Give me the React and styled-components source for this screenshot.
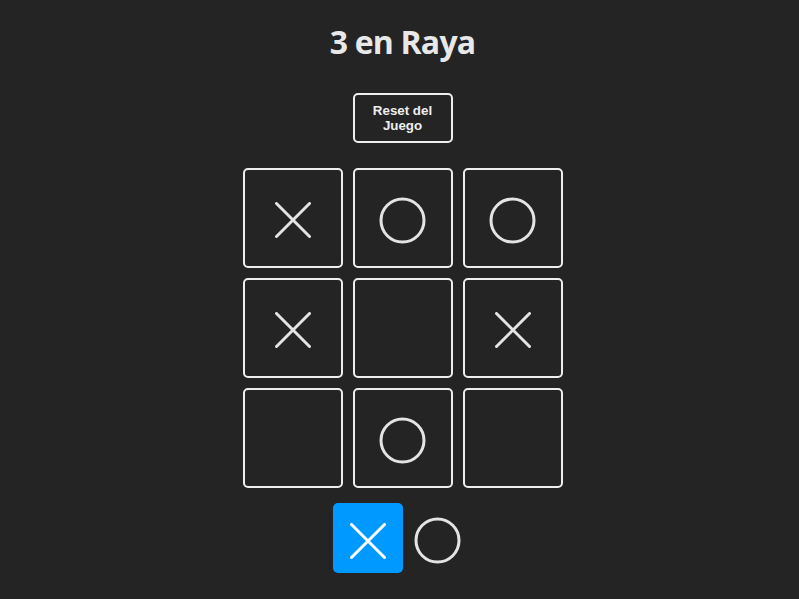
import React, {useState} from 'react';
import styled, {createGlobalStyle} from 'styled-components';

const GlobalStyle = createGlobalStyle`
    html, body {
        margin: 0;
        padding: 0;
        background: #242424;
    }
    body {
        color: rgba(255, 255, 255, 0.87);
        font-family: "Open Sans", "Liberation Sans", sans-serif;
    }
`;

const inicial = ['x', 'o', 'o', 'x', null, 'x', null, 'o', null];

const Cruz = ({size = 36, color = '#e4e4e4', grosor = 3}) => (
    <svg width={size} height={size} viewBox='0 0 36 36'>
        <line x1='1.5' y1='1.5' x2='34.5' y2='34.5' stroke={color} strokeWidth={grosor} strokeLinecap='round' />
        <line x1='34.5' y1='1.5' x2='1.5' y2='34.5' stroke={color} strokeWidth={grosor} strokeLinecap='round' />
    </svg>
);

const Circulo = ({size = 47, color = '#e4e4e4'}) => (
    <svg width={size} height={size} viewBox='0 0 47 47'>
        <circle cx='23.5' cy='23.5' r='21.5' fill='none' stroke={color} strokeWidth='3' />
    </svg>
);

const Ficha = ({valor}) => {
    if (valor === 'x') return <Cruz />;
    if (valor === 'o') return <Circulo />;
    return null;
}

const App = () => {
    const [tablero, cambiarTablero] = useState(inicial);
    const [turno, cambiarTurno] = useState('x');

    const resetJuego = () => {
        cambiarTablero(Array(9).fill(null));
        cambiarTurno('x');
    }

    const jugar = (i) => {
        if (tablero[i]) return;
        const nuevo = [...tablero];
        nuevo[i] = turno;
        cambiarTablero(nuevo);
        cambiarTurno(turno === 'x' ? 'o' : 'x');
    }

    return (
        <>
            <GlobalStyle />
            <Contenedor>
                <Titulo>3 en Raya</Titulo>
                <BotonReset onClick={resetJuego}>Reset del Juego</BotonReset>
                <Tablero>
                    {tablero.map((valor, i) => (
                        <Casilla key={i} onClick={() => jugar(i)}>
                            <Ficha valor={valor} />
                        </Casilla>
                    ))}
                </Tablero>
                <Turno>
                    <CasillaTurno activo={turno === 'x'}>
                        <Cruz size={36} color='#fff' />
                    </CasillaTurno>
                    <CasillaTurno activo={turno === 'o'}>
                        <Circulo />
                    </CasillaTurno>
                </Turno>
            </Contenedor>
        </>
    );
}

const Contenedor = styled.main`
    margin-left: 6px;
    display: flex;
    flex-direction: column;
    align-items: center;
    padding-top: 20px;
`;

const Titulo = styled.h1`
    margin: 0;
    font-family: "Open Sans", sans-serif;
    font-size: 32px;
    font-weight: 700;
    letter-spacing: -0.8px;
    line-height: 44px;
    color: #e8e8e8;
`;

const BotonReset = styled.button`
    margin-top: 29px;
    width: 100px;
    height: 50px;
    padding: 6px 12px;
    background: transparent;
    border: 2px solid #eee;
    border-radius: 5px;
    color: #eee;
    font-family: "Liberation Sans", Arial, sans-serif;
    font-size: 13.33px;
    font-weight: 700;
    line-height: 15px;
    cursor: pointer;
`;

const Tablero = styled.section`
    margin-top: 25px;
    display: grid;
    grid-template-columns: repeat(3, 100px);
    gap: 10px;
`;

const Casilla = styled.div`
    width: 100px;
    height: 100px;
    box-sizing: border-box;
    border: 2px solid #eee;
    border-radius: 5px;
    display: flex;
    align-items: center;
    justify-content: center;
    padding-top: 4px;
    cursor: pointer;
`;

const Turno = styled.section`
    margin-top: 15px;
    display: flex;
`;

const CasillaTurno = styled.div`
    width: 70px;
    height: 70px;
    border-radius: 5px;
    display: flex;
    align-items: center;
    justify-content: center;
    padding-top: 5px;
    box-sizing: border-box;
    background: ${props => props.activo ? '#09f' : 'transparent'};
`;

export default App;
